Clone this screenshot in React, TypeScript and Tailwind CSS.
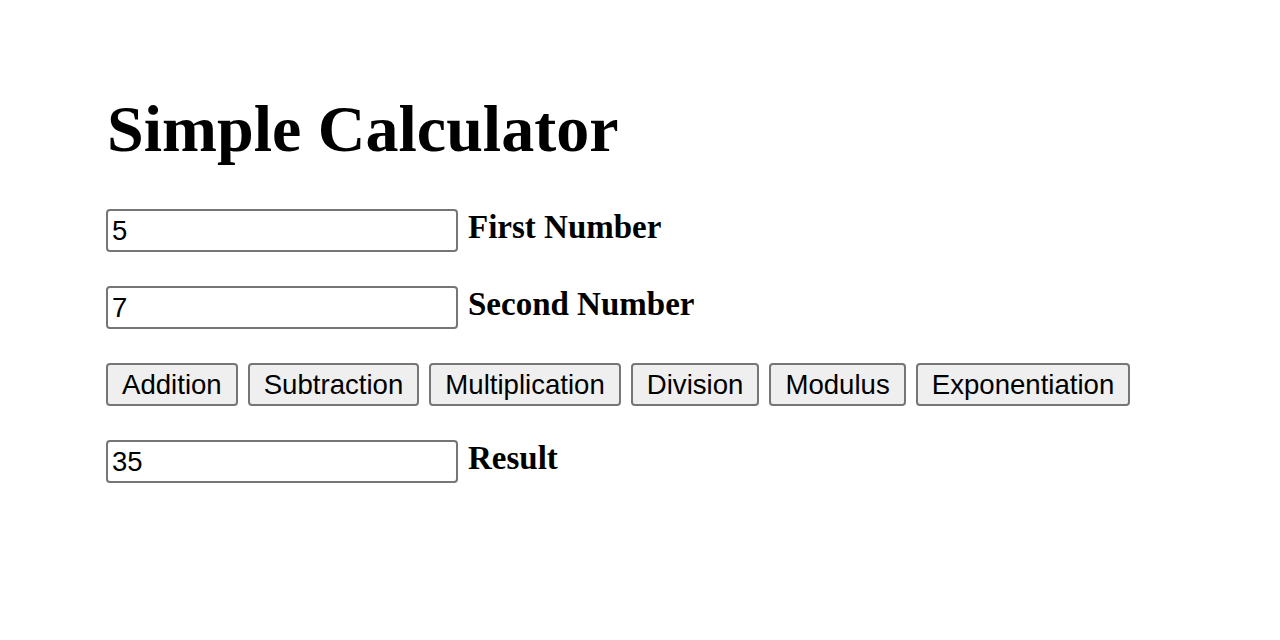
import React, { useState } from "react";

const ops = [
  "Addition",
  "Subtraction",
  "Multiplication",
  "Division",
  "Modulus",
  "Exponentiation",
];

export default function App() {
  const [first, setFirst] = useState("5");
  const [second, setSecond] = useState("7");
  const [result, setResult] = useState("35");

  const calc = (op: string) => {
    const a = parseFloat(first);
    const b = parseFloat(second);
    let r = 0;
    if (op === "Addition") r = a + b;
    else if (op === "Subtraction") r = a - b;
    else if (op === "Multiplication") r = a * b;
    else if (op === "Division") r = a / b;
    else if (op === "Modulus") r = a % b;
    else r = Math.pow(a, b);
    setResult(String(r));
  };

  const inputCls =
    "w-[352px] h-[43px] border-2 border-[#767676] rounded-[4px] bg-white px-[4px] text-[27.5px] text-black font-['Liberation_Sans',Arial,sans-serif] outline-none";

  return (
    <div className="min-h-[640px] w-full bg-white pl-[106px] pt-[96px] font-['Liberation_Serif','Times_New_Roman',serif] text-black">
      <h1 className="text-[66px] font-bold leading-[66px] pl-[1px]">Simple Calculator</h1>

      <div className="mt-[47px] flex flex-col gap-[34px]">
        <div className="flex items-start gap-[10px]">
          <input
            type="text"
            value={first}
            onChange={(e) => setFirst(e.target.value)}
            className={inputCls}
          />
          <b className="text-[33px] leading-[37px]">First Number</b>
        </div>

        <div className="flex items-start gap-[10px]">
          <input
            type="text"
            value={second}
            onChange={(e) => setSecond(e.target.value)}
            className={inputCls}
          />
          <b className="text-[33px] leading-[37px]">Second Number</b>
        </div>

        <div className="flex gap-[10px]">
          {ops.map((op) => (
            <button
              key={op}
              onClick={() => calc(op)}
              className="h-[43px] px-[14px] border-2 border-[#767676] rounded-[4px] bg-[#efefef] text-[27.6px] leading-none text-black font-['Liberation_Sans',Arial,sans-serif]"
            >
              {op}
            </button>
          ))}
        </div>

        <div className="flex items-start gap-[10px]">
          <input type="text" value={result} readOnly className={inputCls} />
          <b className="text-[33px] leading-[37px]">Result</b>
        </div>
      </div>
    </div>
  );
}
